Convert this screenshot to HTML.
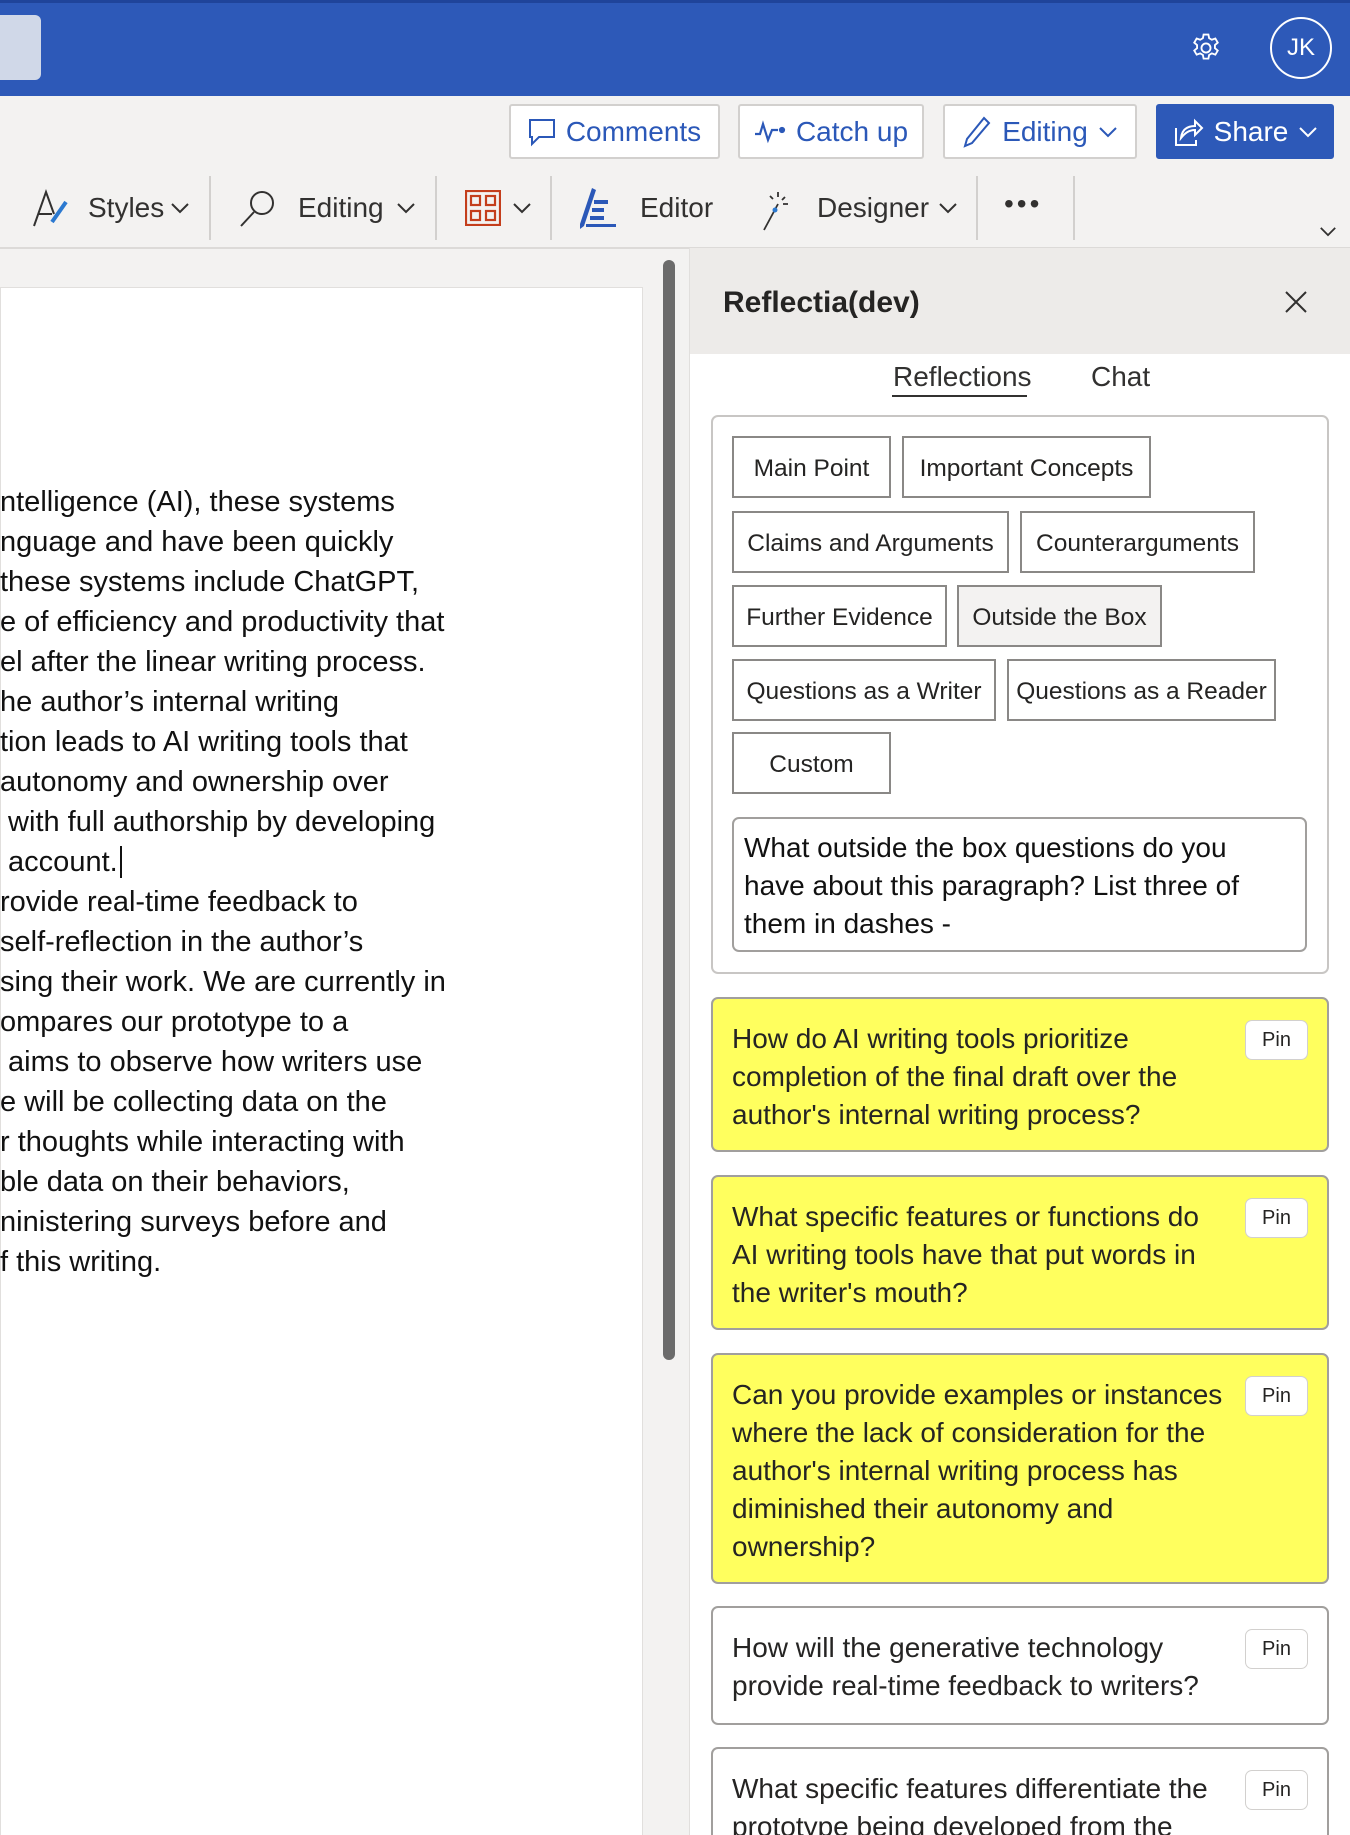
<!DOCTYPE html>
<html style="overflow:hidden;height:1835px"><head><meta charset="utf-8"><style>
*{box-sizing:border-box;margin:0;padding:0}
html,body{overflow:hidden}
body{width:1350px;height:1835px;position:relative;background:#f3f2f1;font-family:"Liberation Sans",sans-serif;color:#252423}
.a{position:absolute}
.top{left:0;top:0;width:1350px;height:96px;background:#2d59b8;border-top:3px solid #1f449a}
.rb{top:104px;height:55px;background:#fff;border:2px solid #d2d0ce;border-radius:3px;color:#2b58b8;font-size:28px;display:flex;align-items:center;justify-content:center;gap:10px}
.sep{top:176px;width:2px;height:64px;background:#d2d0ce}
.rt{top:192px;font-size:28px;color:#323130}
.panel{left:689px;top:248px;width:661px;height:1587px;background:#fff;border-left:1px solid #e1dfdd}
.btn{height:62px;border:2px solid #8a8886;background:#fff;font-size:24.5px;display:flex;align-items:center;justify-content:center;color:#252423;white-space:nowrap;padding-top:3px}
.card{left:711px;width:618px;border:2px solid #a19f9d;border-radius:7px;padding:21px 19px 19px;font-size:28px;line-height:38px;white-space:nowrap;color:#252423}
.y{background:#ffff5e}
.pin{position:absolute;right:19px;top:21px;width:63px;height:40px;background:#fff;border:1px solid #d2d0ce;border-radius:7px;font-size:20px;display:flex;align-items:center;justify-content:center}
.doc div{position:absolute;left:0;font-size:29px;white-space:nowrap;color:#111;height:40px;line-height:40px}
.chev{position:absolute}
</style></head><body>
<div class="a top"></div>
<div class="a" style="left:-8px;top:15px;width:49px;height:65px;background:#d0d8e8;border-radius:6px"></div>
<svg class="a" style="left:1189px;top:31px" width="34" height="34" viewBox="0 0 24 24" fill="none" stroke="#fff" stroke-width="1.3"><circle cx="12" cy="12" r="3.2"/><path d="M10.3 2.5h3.4l.5 2.6 1.9 1.1 2.5-.9 1.7 2.9-2 1.7v2.2l2 1.7-1.7 2.9-2.5-.9-1.9 1.1-.5 2.6h-3.4l-.5-2.6-1.9-1.1-2.5.9-1.7-2.9 2-1.7v-2.2l-2-1.7 1.7-2.9 2.5.9 1.9-1.1z"/></svg>
<div class="a" style="left:1270px;top:17px;width:62px;height:62px;border:2px solid #fff;border-radius:50%;color:#fff;font-size:24px;display:flex;align-items:center;justify-content:center">JK</div>

<div class="a rb" style="left:509px;width:211px"><svg width="28" height="30" viewBox="0 0 28 30" fill="none" stroke="#2b58b8" stroke-width="2"><path d="M2 3h24v17H11l-7 7v-7H2z"/></svg>Comments</div>
<div class="a rb" style="left:738px;width:186px"><svg width="32" height="24" viewBox="0 0 32 24" fill="none" stroke="#2b58b8" stroke-width="2.2"><path d="M1 14h5l3-10 5 16 4-10h6"/><circle cx="28" cy="10" r="2" fill="#2b58b8"/></svg>Catch up</div>
<div class="a rb" style="left:943px;width:194px"><svg width="30" height="34" viewBox="0 0 30 34" fill="none" stroke="#2b58b8" stroke-width="2"><path d="M22 3l5 5L10 28l-7 3 2-7z"/></svg>Editing <svg width="20" height="12" viewBox="0 0 20 12" fill="none" stroke="#2b58b8" stroke-width="2"><path d="M2 2l8 8 8-8"/></svg></div>
<div class="a rb" style="left:1156px;width:178px;background:#2d59b8;border-color:#2d59b8;color:#fff"><svg width="32" height="32" viewBox="0 0 32 32" fill="none" stroke="#fff" stroke-width="2"><path d="M4 12v17h20v-5"/><path d="M9 22c1-8 6-12 14-12V5l7 7-7 7v-5c-6 0-10 3-14 8z"/></svg>Share <svg width="20" height="12" viewBox="0 0 20 12" fill="none" stroke="#fff" stroke-width="2"><path d="M2 2l8 8 8-8"/></svg></div>

<svg class="a" style="left:30px;top:188px" width="42" height="42" viewBox="0 0 42 42" fill="none" stroke="#323130" stroke-width="2"><path d="M4 38L16 4l8 22M8 26h14"/><path d="M36 14L22 34" stroke="#2b79d0" stroke-width="4"/></svg>
<div class="a rt" style="left:88px">Styles</div>
<svg class="chev" style="left:170px;top:202px" width="20" height="12" viewBox="0 0 20 12" fill="none" stroke="#323130" stroke-width="2"><path d="M2 2l8 8 8-8"/></svg>
<div class="a sep" style="left:209px"></div>
<svg class="a" style="left:238px;top:188px" width="40" height="40" viewBox="0 0 40 40" fill="none" stroke="#323130" stroke-width="2"><circle cx="24" cy="15" r="11"/><path d="M16 24L3 38"/></svg>
<div class="a rt" style="left:298px">Editing</div>
<svg class="chev" style="left:396px;top:202px" width="20" height="12" viewBox="0 0 20 12" fill="none" stroke="#323130" stroke-width="2"><path d="M2 2l8 8 8-8"/></svg>
<div class="a sep" style="left:435px"></div>
<svg class="a" style="left:465px;top:190px" width="36" height="36" viewBox="0 0 36 36" fill="none" stroke="#c43e1c" stroke-width="2.2"><rect x="1" y="1" width="34" height="34"/><rect x="6" y="6" width="9" height="9"/><rect x="21" y="6" width="9" height="9"/><rect x="6" y="21" width="9" height="9"/><rect x="21" y="21" width="9" height="9"/></svg>
<svg class="chev" style="left:512px;top:202px" width="20" height="12" viewBox="0 0 20 12" fill="none" stroke="#323130" stroke-width="2"><path d="M2 2l8 8 8-8"/></svg>
<div class="a sep" style="left:550px"></div>
<svg class="a" style="left:578px;top:186px" width="42" height="44" viewBox="0 0 42 44" fill="#2b58b8"><path d="M14 2l4 2-12 36-4 3 0-5z"/><rect x="16" y="14" width="14" height="4"/><rect x="14" y="22" width="12" height="4"/><rect x="12" y="30" width="14" height="4"/><rect x="8" y="38" width="30" height="3"/></svg>
<div class="a rt" style="left:640px">Editor</div>
<svg class="a" style="left:758px;top:188px" width="36" height="44" viewBox="0 0 36 44" fill="none" stroke="#323130" stroke-width="1.8"><path d="M20 16L6 42"/><path d="M20 4v5M27 9l-3 3M30 16h-5M12 8l3 3" /><circle cx="17" cy="22" r="2.5" fill="#2b79d0" stroke="none"/></svg>
<div class="a rt" style="left:817px">Designer</div>
<svg class="chev" style="left:938px;top:202px" width="20" height="12" viewBox="0 0 20 12" fill="none" stroke="#323130" stroke-width="2"><path d="M2 2l8 8 8-8"/></svg>
<div class="a sep" style="left:976px"></div>
<div class="a rt" style="left:1004px;top:188px;font-size:28px;letter-spacing:3px">&bull;&bull;&bull;</div>
<div class="a sep" style="left:1073px"></div>
<svg class="chev" style="left:1319px;top:226px" width="18" height="11" viewBox="0 0 20 12" fill="none" stroke="#323130" stroke-width="2"><path d="M2 2l8 8 8-8"/></svg>
<div class="a" style="left:0;top:247px;width:1350px;height:2px;background:#dcdad8"></div>

<div class="a" style="left:0;top:287px;width:643px;height:1560px;background:#fff;border:1px solid #e1dfdd"></div>
<div class="a" style="left:663px;top:260px;width:12px;height:1100px;background:#6b6b6b;border-radius:6px"></div>
<div class="a doc" style="left:0;top:2px">
<div style="top:480px">ntelligence (AI), these systems</div>
<div style="top:520px">nguage and have been quickly</div>
<div style="top:560px">these systems include ChatGPT,</div>
<div style="top:600px">e of efficiency and productivity that</div>
<div style="top:640px">el after the linear writing process.</div>
<div style="top:680px">he author’s internal writing</div>
<div style="top:720px">tion leads to AI writing tools that</div>
<div style="top:760px"> autonomy and ownership over</div>
<div style="top:800px">&nbsp;with full authorship by developing</div>
<div style="top:840px">&nbsp;account.<span style="border-left:2px solid #111;margin-left:2px"></span></div>
<div style="top:880px">rovide real-time feedback to</div>
<div style="top:920px">self-reflection in the author’s</div>
<div style="top:960px">sing their work. We are currently in</div>
<div style="top:1000px">ompares our prototype to a</div>
<div style="top:1040px">&nbsp;aims to observe how writers use</div>
<div style="top:1080px">e will be collecting data on the</div>
<div style="top:1120px">r thoughts while interacting with</div>
<div style="top:1160px">ble data on their behaviors,</div>
<div style="top:1200px">ninistering surveys before and</div>
<div style="top:1240px">f this writing.</div>
</div>

<div class="a panel"></div>
<div class="a" style="left:690px;top:248px;width:660px;height:106px;background:#edebe9"></div>
<div class="a" style="left:723px;top:286px;font-size:30px;font-weight:bold;color:#252423">Reflectia(dev)</div>
<svg class="a" style="left:1284px;top:290px" width="24" height="24" viewBox="0 0 24 24" stroke="#323130" stroke-width="2"><path d="M2 2l20 20M22 2L2 22"/></svg>
<div class="a" style="left:893px;top:361px;font-size:28px;color:#323130">Reflections</div>
<div class="a" style="left:892px;top:395px;width:135px;height:2px;background:#323130"></div>
<div class="a" style="left:1091px;top:361px;font-size:28px;color:#323130">Chat</div>

<div class="a" style="left:711px;top:415px;width:618px;height:559px;border:2px solid #c8c6c4;border-radius:7px;background:#fff"></div>
<div class="a btn" style="left:732px;top:436px;width:159px">Main Point</div>
<div class="a btn" style="left:902px;top:436px;width:249px">Important Concepts</div>
<div class="a btn" style="left:732px;top:511px;width:277px">Claims and Arguments</div>
<div class="a btn" style="left:1020px;top:511px;width:235px">Counterarguments</div>
<div class="a btn" style="left:732px;top:585px;width:215px">Further Evidence</div>
<div class="a btn" style="left:957px;top:585px;width:205px;background:#f3f2f1">Outside the Box</div>
<div class="a btn" style="left:732px;top:659px;width:264px">Questions as a Writer</div>
<div class="a btn" style="left:1007px;top:659px;width:269px">Questions as a Reader</div>
<div class="a btn" style="left:732px;top:732px;width:159px">Custom</div>
<div class="a" style="left:732px;top:817px;width:575px;height:135px;border:2px solid #a19f9d;border-radius:7px;padding:10px 10px 6px;font-size:28px;line-height:38px;color:#111;white-space:nowrap">What outside the box questions do you<br>have about this paragraph? List three of<br>them in dashes -</div>

<div class="a card y" style="top:997px;height:155px">How do AI writing tools prioritize<br>completion of the final draft over the<br>author's internal writing process?<div class="pin">Pin</div></div>
<div class="a card y" style="top:1175px;height:155px">What specific features or functions do<br>AI writing tools have that put words in<br>the writer's mouth?<div class="pin">Pin</div></div>
<div class="a card y" style="top:1353px;height:231px">Can you provide examples or instances<br>where the lack of consideration for the<br>author's internal writing process has<br>diminished their autonomy and<br>ownership?<div class="pin">Pin</div></div>
<div class="a card" style="top:1606px;height:119px">How will the generative technology<br>provide real-time feedback to writers?<div class="pin">Pin</div></div>
<div class="a card" style="top:1747px;height:88px;overflow:hidden;border-bottom:none;border-radius:7px 7px 0 0">What specific features differentiate the<br>prototype being developed from the<div class="pin">Pin</div></div>
</body></html>
